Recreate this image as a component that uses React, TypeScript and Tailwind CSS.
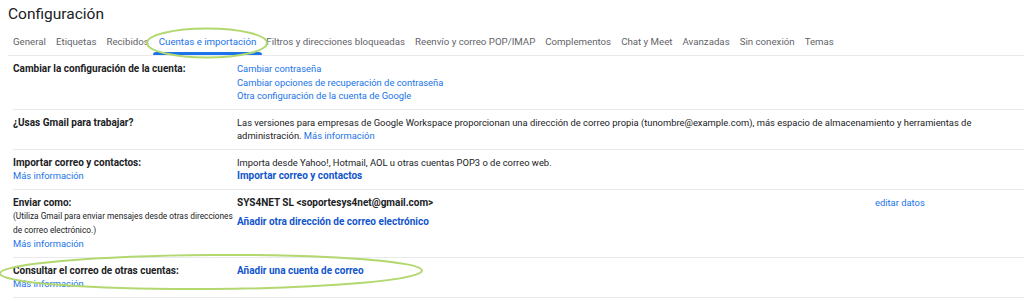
const tabs = [
  "General",
  "Etiquetas",
  "Recibidos",
  "Cuentas e importación",
  "Filtros y direcciones bloqueadas",
  "Reenvío y correo POP/IMAP",
  "Complementos",
  "Chat y Meet",
  "Avanzadas",
  "Sin conexión",
  "Temas",
];

const Link = ({ children, bold = false }: { children: React.ReactNode; bold?: boolean }) => (
  <a
    href="#"
    className={bold ? "text-[10px] font-bold text-[#1155cc]" : "text-[#1a73e8]"}
  >
    {children}
  </a>
);

const Row = ({ children }: { children: React.ReactNode }) => (
  <div className="flex border-b border-[#e8eaed] py-[6px] leading-[13.5px]">{children}</div>
);

const App = () => {
  return (
    <div
      className="relative h-[301px] w-[1024px] overflow-hidden bg-white text-[9.4px] text-[#202124]"
      style={{ fontFamily: "Roboto, 'Liberation Sans', sans-serif" }}
    >
      <h1 className="pl-[8px] pt-[3px] text-[15.5px] leading-[22px] text-[#202124]">Configuración</h1>

      {/* tabs */}
      <div className="ml-[8px] mt-[2px] flex h-[29px] items-stretch border-b border-[#e8eaed] text-[9.7px] text-[#5f6368]">
        {tabs.map((t) => {
          const active = t === "Cuentas e importación";
          return (
            <div
              key={t}
              className={`relative flex items-center px-[5px] pt-[3px] ${active ? "text-[#1a73e8]" : ""}`}
            >
              {t}
              {active && (
                <span className="absolute bottom-0 left-[-1px] right-[-1px] h-[3px] rounded-t-[3px] bg-[#1a73e8]" />
              )}
            </div>
          );
        })}
      </div>

      <div className="ml-[13px]">
        <Row>
          <div className="w-[224px] shrink-0 text-[10px] font-bold">Cambiar la configuración de la cuenta:</div>
          <div className="flex flex-col">
            <Link>Cambiar contraseña</Link>
            <Link>Cambiar opciones de recuperación de contraseña</Link>
            <Link>Otra configuración de la cuenta de Google</Link>
          </div>
        </Row>

        <Row>
          <div className="w-[224px] shrink-0 text-[10px] font-bold">¿Usas Gmail para trabajar?</div>
          <p className="max-w-[760px]">
            Las versiones para empresas de Google Workspace proporcionan una dirección de correo propia
            (tunombre@example.com), más espacio de almacenamiento y herramientas de administración.{" "}
            <Link>Más información</Link>
          </p>
        </Row>

        <Row>
          <div className="flex w-[224px] shrink-0 flex-col">
            <span className="text-[10px] font-bold">Importar correo y contactos:</span>
            <Link>Más información</Link>
          </div>
          <div className="flex flex-col">
            <span>Importa desde Yahoo!, Hotmail, AOL u otras cuentas POP3 o de correo web.</span>
            <Link bold>Importar correo y contactos</Link>
          </div>
        </Row>

        <Row>
          <div className="flex w-[224px] shrink-0 flex-col">
            <span className="text-[10px] font-bold">Enviar como:</span>
            <span className="w-[226px] text-[8.3px] leading-[14px]">
              (Utiliza Gmail para enviar mensajes desde otras direcciones de correo electrónico.)
            </span>
            <Link>Más información</Link>
          </div>
          <div className="flex w-[638px] shrink-0 flex-col">
            <span className="text-[10px] font-bold">SYS4NET SL &lt;soportesys4net@gmail.com&gt;</span>
            <span className="mt-[6px]">
              <Link bold>Añadir otra dirección de correo electrónico</Link>
            </span>
          </div>
          <div>
            <Link>editar datos</Link>
          </div>
        </Row>

        <Row>
          <div className="flex w-[224px] shrink-0 flex-col">
            <span className="text-[10px] font-bold">Consultar el correo de otras cuentas:</span>
            <Link>Más información</Link>
          </div>
          <div>
            <Link bold>Añadir una cuenta de correo</Link>
          </div>
        </Row>
      </div>

      {/* hand-drawn highlight rings */}
      <svg className="pointer-events-none absolute left-0 top-0" width="1024" height="301">
        <ellipse cx="207" cy="43" rx="60" ry="14.5" fill="none" stroke="#b3d870" strokeWidth="2" />
        <ellipse
          cx="211"
          cy="272"
          rx="211"
          ry="17"
          fill="none"
          stroke="#b3d870"
          strokeWidth="2"
          transform="rotate(-0.4 211 272)"
        />
      </svg>
    </div>
  );
};

export default App;
